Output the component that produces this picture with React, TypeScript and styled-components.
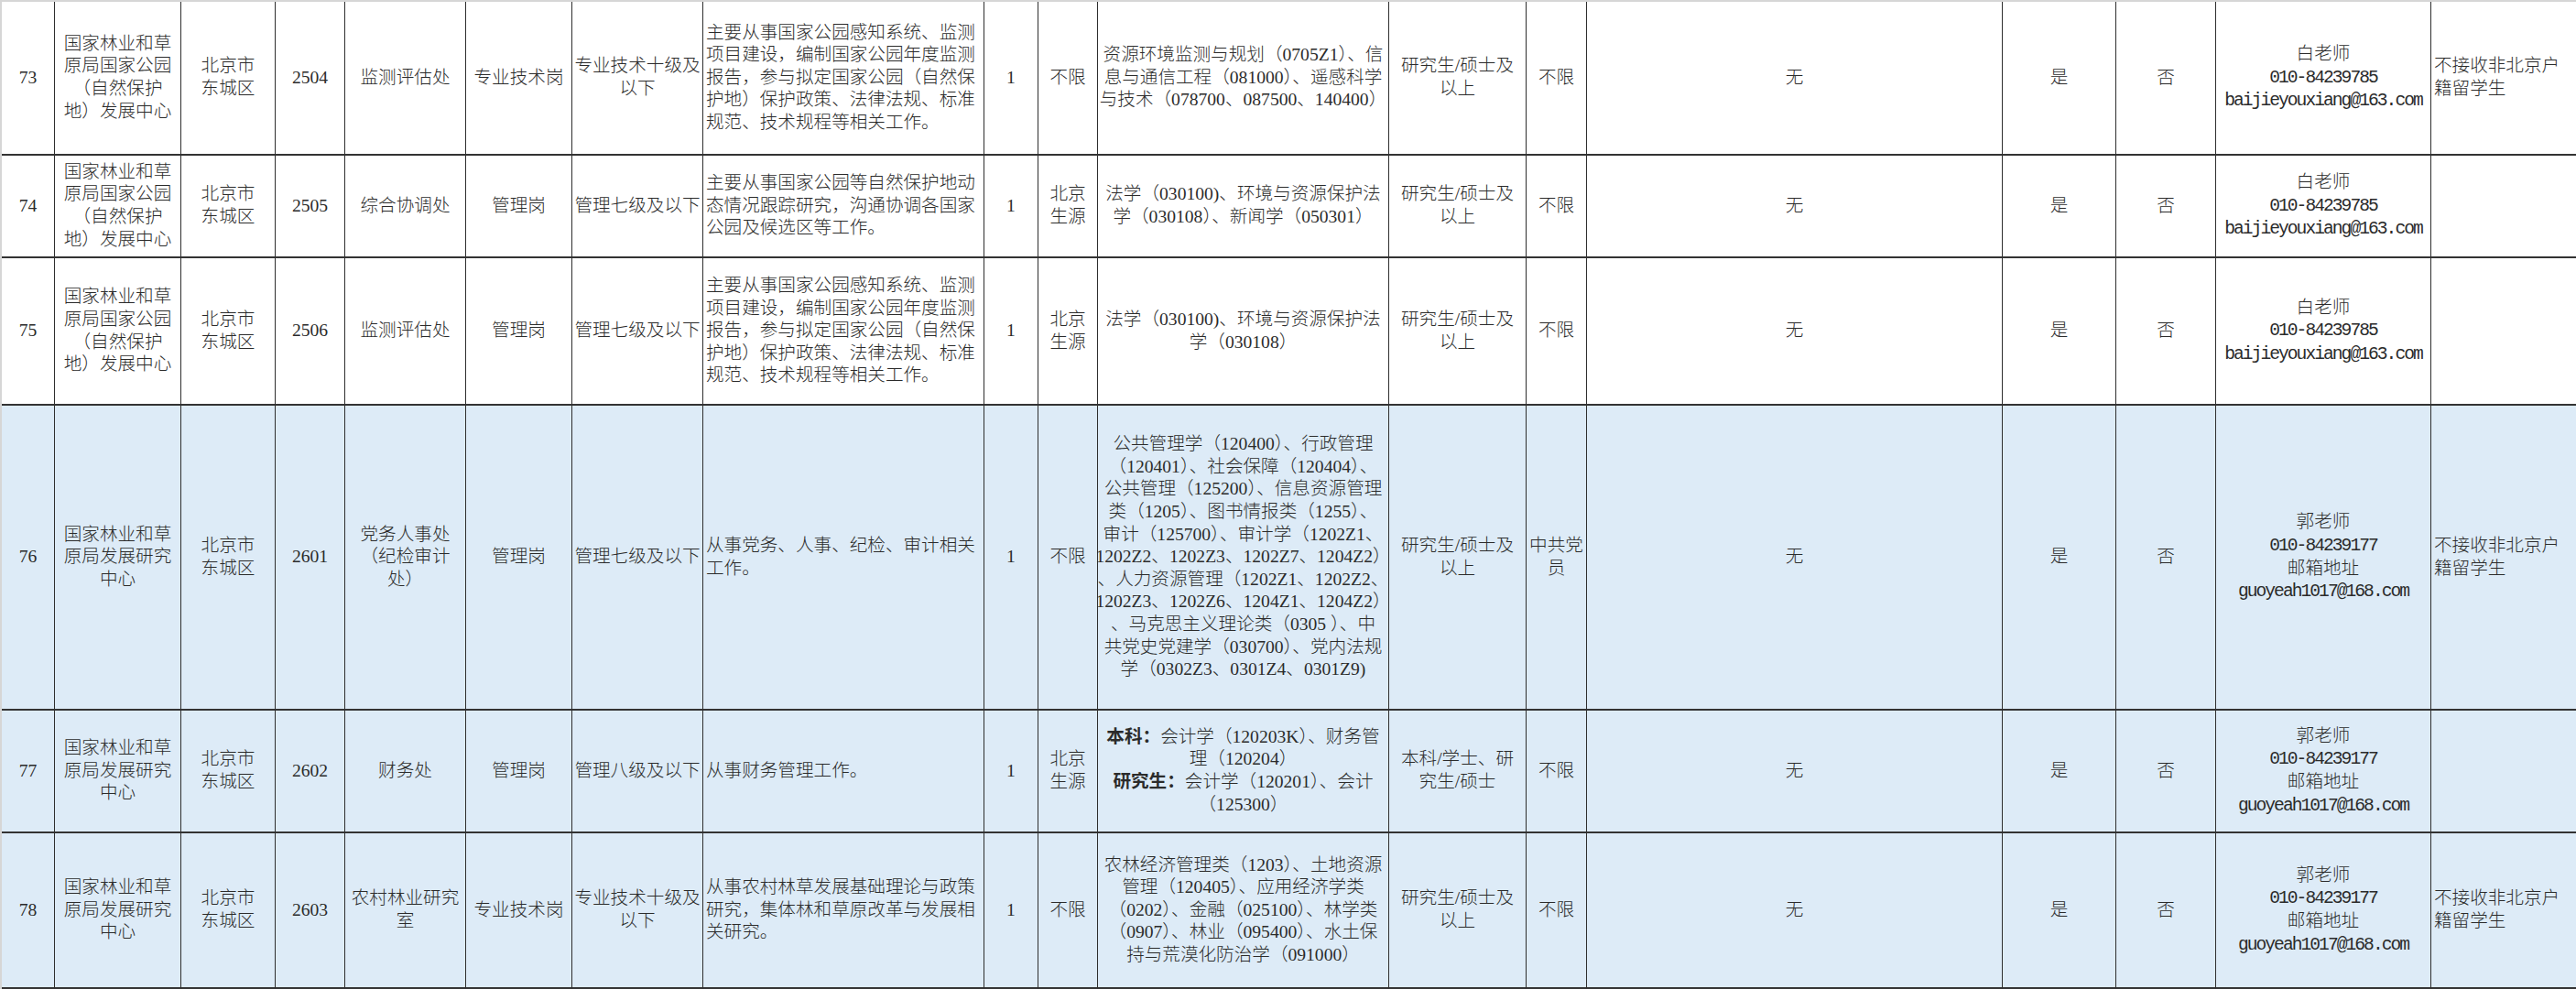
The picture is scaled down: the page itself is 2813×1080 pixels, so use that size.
import React from "react";
import styled, { createGlobalStyle } from "styled-components";

const GlobalStyle = createGlobalStyle`
  html, body {
    margin: 0;
    padding: 0;
    background: #ffffff;
  }
  body {
    font-family: "Liberation Serif", "Noto Sans CJK SC", serif;
    color: #2b2b2b;
  }
`;

const COLUMNS = [
  58, 138, 103, 76, 132, 116, 143, 307, 59, 65, 318, 150, 66, 454, 124, 109,
  235, 158,
];
const ROWS = [168, 112, 161, 333, 134, 170];

const Sheet = styled.div`
  display: grid;
  grid-template-columns: ${COLUMNS.map((w) => `${w}px`).join(" ")};
  grid-template-rows: ${ROWS.map((h) => `${h}px`).join(" ")};
  width: 2813px;
  height: 1080px;
  box-sizing: border-box;
  border-top: 2px solid #d6d6d6;
  border-left: 2px solid #d6d6d6;
  overflow: hidden;
`;

const Cell = styled.div<{ $shaded?: boolean; $left?: boolean; $last?: boolean }>`
  display: flex;
  flex-direction: column;
  justify-content: center;
  align-items: ${(p) => (p.$left ? "flex-start" : "center")};
  text-align: ${(p) => (p.$left ? "left" : "center")};
  box-sizing: border-box;
  padding: 0 3px;
  border-right: ${(p) => (p.$last ? "none" : "1.5px solid #2e2e2e")};
  border-bottom: 2px solid #333;
  background: ${(p) => (p.$shaded ? "#ddebf7" : "#ffffff")};
  font-size: 19.6px;
  line-height: 24.6px;
  font-weight: 300;
  white-space: nowrap;
`;

const Line = styled.span`
  display: block;
`;

const Mono = styled.span`
  font-family: "Liberation Mono", monospace;
  letter-spacing: -0.1em;
`;

const Strong = styled.b`
  font-weight: 700;
`;

type Content = React.ReactNode[];

type Row = {
  shaded?: boolean;
  cells: Content[];
};

const ORG_PARK = ["国家林业和草", "原局国家公园", "（自然保护", "地）发展中心"];
const ORG_CENTER = ["国家林业和草", "原局发展研究", "中心"];
const AREA = ["北京市", "东城区"];
const DEGREE = ["研究生/硕士及", "以上"];
const NO_FOREIGN = ["不接收非北京户", "籍留学生"];
const MONITOR_DESC = [
  "主要从事国家公园感知系统、监测",
  "项目建设，编制国家公园年度监测",
  "报告，参与拟定国家公园（自然保",
  "护地）保护政策、法律法规、标准",
  "规范、技术规程等相关工作。",
];

const BAI = [
  "白老师",
  <Mono key="p">010-84239785</Mono>,
  <Mono key="m">baijieyouxiang@163.com</Mono>,
];
const GUO = [
  "郭老师",
  <Mono key="p">010-84239177</Mono>,
  "邮箱地址",
  <Mono key="m">guoyeah1017@168.com</Mono>,
];

const rows: Row[] = [
  {
    cells: [
      ["73"],
      ORG_PARK,
      AREA,
      ["2504"],
      ["监测评估处"],
      ["专业技术岗"],
      ["专业技术十级及", "以下"],
      MONITOR_DESC,
      ["1"],
      ["不限"],
      [
        "资源环境监测与规划（0705Z1）、信",
        "息与通信工程（081000）、遥感科学",
        "与技术（078700、087500、140400）",
      ],
      DEGREE,
      ["不限"],
      ["无"],
      ["是"],
      ["否"],
      BAI,
      NO_FOREIGN,
    ],
  },
  {
    cells: [
      ["74"],
      ORG_PARK,
      AREA,
      ["2505"],
      ["综合协调处"],
      ["管理岗"],
      ["管理七级及以下"],
      [
        "主要从事国家公园等自然保护地动",
        "态情况跟踪研究，沟通协调各国家",
        "公园及候选区等工作。",
      ],
      ["1"],
      ["北京", "生源"],
      ["法学（030100)、环境与资源保护法", "学（030108）、新闻学（050301）"],
      DEGREE,
      ["不限"],
      ["无"],
      ["是"],
      ["否"],
      BAI,
      [],
    ],
  },
  {
    cells: [
      ["75"],
      ORG_PARK,
      AREA,
      ["2506"],
      ["监测评估处"],
      ["管理岗"],
      ["管理七级及以下"],
      MONITOR_DESC,
      ["1"],
      ["北京", "生源"],
      ["法学（030100)、环境与资源保护法", "学（030108）"],
      DEGREE,
      ["不限"],
      ["无"],
      ["是"],
      ["否"],
      BAI,
      [],
    ],
  },
  {
    shaded: true,
    cells: [
      ["76"],
      ORG_CENTER,
      AREA,
      ["2601"],
      ["党务人事处", "（纪检审计", "处）"],
      ["管理岗"],
      ["管理七级及以下"],
      ["从事党务、人事、纪检、审计相关", "工作。"],
      ["1"],
      ["不限"],
      [
        "公共管理学（120400）、行政管理",
        "（120401）、社会保障（120404）、",
        "公共管理（125200）、信息资源管理",
        "类（1205）、图书情报类（1255）、",
        "审计（125700）、审计学（1202Z1、",
        "1202Z2、1202Z3、1202Z7、1204Z2）",
        "、人力资源管理（1202Z1、1202Z2、",
        "1202Z3、1202Z6、1204Z1、1204Z2）",
        "、马克思主义理论类（0305 ）、中",
        "共党史党建学（030700）、党内法规",
        "学（0302Z3、0301Z4、0301Z9)",
      ],
      DEGREE,
      ["中共党", "员"],
      ["无"],
      ["是"],
      ["否"],
      GUO,
      NO_FOREIGN,
    ],
  },
  {
    shaded: true,
    cells: [
      ["77"],
      ORG_CENTER,
      AREA,
      ["2602"],
      ["财务处"],
      ["管理岗"],
      ["管理八级及以下"],
      ["从事财务管理工作。"],
      ["1"],
      ["北京", "生源"],
      [
        <>
          <Strong>本科：</Strong>会计学（120203K）、财务管
        </>,
        "理（120204）",
        <>
          <Strong>研究生：</Strong>会计学（120201）、会计
        </>,
        "（125300）",
      ],
      ["本科/学士、研", "究生/硕士"],
      ["不限"],
      ["无"],
      ["是"],
      ["否"],
      GUO,
      [],
    ],
  },
  {
    shaded: true,
    cells: [
      ["78"],
      ORG_CENTER,
      AREA,
      ["2603"],
      ["农村林业研究", "室"],
      ["专业技术岗"],
      ["专业技术十级及", "以下"],
      [
        "从事农村林草发展基础理论与政策",
        "研究，集体林和草原改革与发展相",
        "关研究。",
      ],
      ["1"],
      ["不限"],
      [
        "农林经济管理类（1203）、土地资源",
        "管理（120405）、应用经济学类",
        "（0202）、金融（025100）、林学类",
        "（0907）、林业（095400）、水土保",
        "持与荒漠化防治学（091000）",
      ],
      DEGREE,
      ["不限"],
      ["无"],
      ["是"],
      ["否"],
      GUO,
      NO_FOREIGN,
    ],
  },
];

// description and remark columns are left aligned
const LEFT_COLUMNS = new Set([7, 17]);

const App = () => (
  <>
    <GlobalStyle />
    <Sheet>
      {rows.map((row, r) =>
        row.cells.map((lines, c) => (
          <Cell
            key={`${r}-${c}`}
            $shaded={row.shaded}
            $left={LEFT_COLUMNS.has(c)}
            $last={c === COLUMNS.length - 1}
          >
            {lines.map((line, i) => (
              <Line key={i}>{line}</Line>
            ))}
          </Cell>
        ))
      )}
    </Sheet>
  </>
);

export default App;
